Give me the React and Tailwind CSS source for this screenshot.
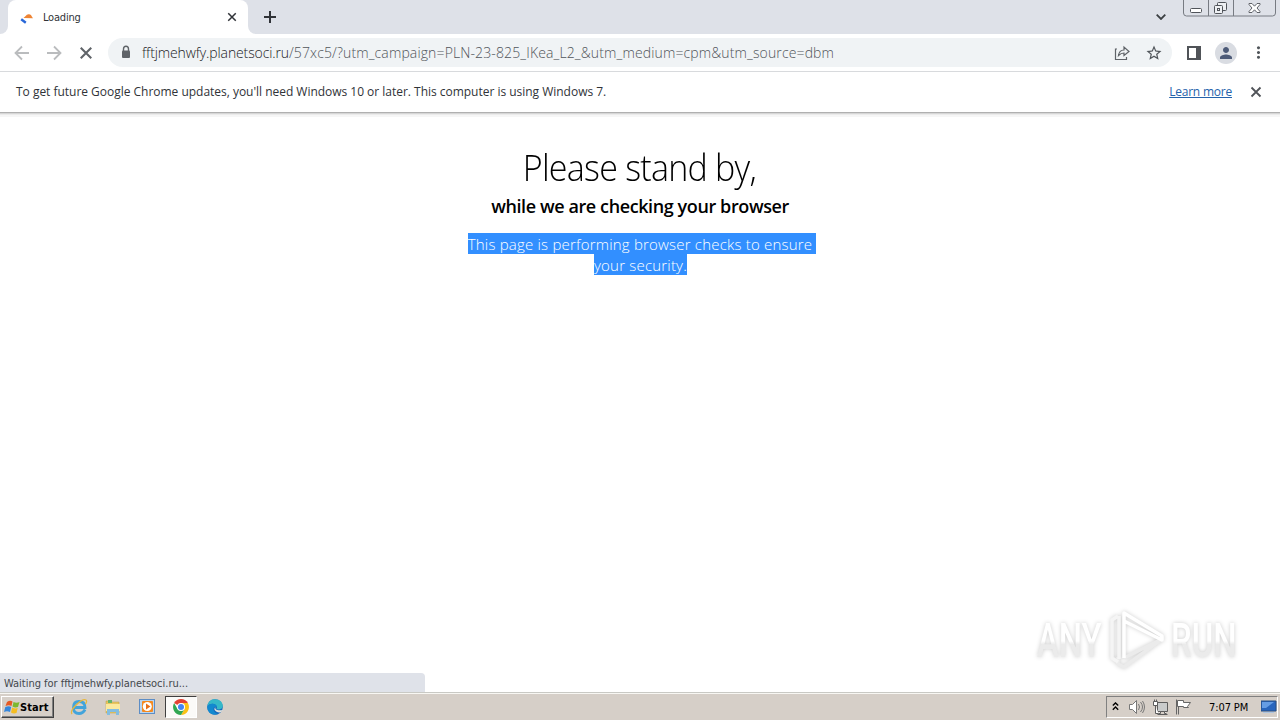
import React from "react";
import { MdPerson, MdStarBorder, MdMoreVert } from "react-icons/md";

function CloseIcon({ className }) {
  return (
    <svg viewBox="0 0 12 12" className={className} fill="none" stroke="currentColor">
      <path d="M1.500 1.500l9 9M10.500 1.500l-9 9" strokeWidth="1.800" />
    </svg>
  );
}

function ArrowIcon({ className }) {
  return (
    <svg viewBox="0 0 16 16" className={className} fill="none" stroke="currentColor" strokeWidth="1.800">
      <path d="M15 8H2M8 1.500L1.500 8L8 14.500" />
    </svg>
  );
}

function LockIcon() {
  return (
    <svg viewBox="0 0 16 16" className="mb-[2px] size-4" fill="none">
      <rect x="4" y="6.500" width="8" height="7.500" rx="1" fill="#5f6368" />
      <path d="M5.500 7V5q0-2.800 2.500-2.800T10.500 5v2" stroke="#5f6368" strokeWidth="1.400" />
    </svg>
  );
}

function TabStrip() {
  return (
    <div className="flex h-[34px] bg-[#dee1e8]">
      <div className="h-full w-2 bg-white">
        <div className="h-full rounded-br-lg bg-[#dee1e8]" />
      </div>
      <div className="flex h-full w-[240px] items-center rounded-t-lg bg-white pl-3">
        {/* Favicon */}
        <svg viewBox="0 0 16 16" className="mt-[3px] size-4 shrink-0">
          <path d="M3.500 7C5 6 6 3.500 8.500 3.200c2-.2 3 1 3.300 2.300L13 7.200z" fill="#ee8434" />
          <path d="M1.200 8.300L5.800 11.800" fill="none" stroke="#2867d8" strokeWidth="2.400" />
        </svg>
        <span className="mt-[2px] ml-[7px] flex-1 font-['DejaVu_Sans_Condensed','DejaVu_Sans',sans-serif] text-[11px] tracking-[-0.2px] text-[#303338]">
          Loading
        </span>
        <CloseIcon className="mr-[11px] size-[10px] text-[#303338]" />
      </div>
      <div className="h-full w-2 bg-white">
        <div className="h-full rounded-bl-lg bg-[#dee1e8]" />
      </div>
      <svg viewBox="0 0 12 12" className="mt-[11px] ml-2 size-3" stroke="#303338" strokeWidth="2">
        <path d="M6 0v12M0 6h12" />
      </svg>
      <div className="flex-1" />
      <svg viewBox="0 0 10 6" className="mt-[14px] mr-[17px] h-[6px] w-[10px]" fill="none" stroke="#3c4043" strokeWidth="1.800">
        <path d="M.7.7L5 5L9.300.7" />
      </svg>
      {/* Window controls */}
      <svg viewBox="0 0 94 18" className="mr-[3px] h-[18px] w-[94px]" fill="none" stroke="#777b82">
        <path d="M.5 0v13q0 3 3 3h86q3 0 3-3V0M25.500 0v16M50.500 0v16" />
        <rect x="7.500" y="8.500" width="11" height="4" rx="1" fill="#fff" stroke="#50545a" />
        <g stroke="#50545a" fill="#eef0f3">
          <rect x="34.500" y="2.500" width="9" height="8" rx="1" />
          <rect x="31.500" y="5.500" width="8" height="8" rx="1" />
          <rect x="34.500" y="8.500" width="2" height="2" />
        </g>
        <path
          d="M66 3.500h3l2.500 2.700L74 3.500h3v1l-3 3.500 3 3.500v1h-3l-2.500-2.700L69 12.500h-3v-1L69 8l-3-3.500z"
          fill="#fff"
          stroke="#50545a"
          strokeWidth=".9"
        />
      </svg>
    </div>
  );
}

function Toolbar() {
  return (
    <div className="flex h-[38px] items-center border-b border-[#d8dadd] bg-white pl-[14px]">
      <ArrowIcon className="size-4 text-[#babcbe]" />
      <ArrowIcon className="ml-4 size-4 rotate-180 text-[#babcbe]" />
      <CloseIcon className="ml-[17px] size-[14px] text-[#5f6368]" />
      <div className="ml-[15px] flex h-[29px] w-[1064px] items-center rounded-full bg-[#f0f3f5] pl-[10px]">
        <LockIcon />
        <div className="ml-2 flex-1 font-['Open_Sans',sans-serif] text-[14px] font-light whitespace-nowrap text-[#50555a]">
          <span className="tracking-[-0.12px] text-[#202124]">fftjmehwfy.planetsoci.ru</span>
          <span className="tracking-[0.13px]">
            /57xc5/?utm_campaign=PLN-23-825_IKea_L2_&amp;utm_medium=cpm&amp;utm_source=dbm
          </span>
        </div>
        <svg viewBox="0 0 16 16" className="size-4" fill="none" stroke="#5f6368" strokeWidth="1.200">
          <path d="M3 4H1.500v10.500h11V12" />
          <path d="M4.500 10.500C5 7 7 5 10 5V2l5 4.500-5 4V8C7.500 8 6 9 4.500 10.500z" />
        </svg>
        <MdStarBorder className="mr-[9px] ml-[15px] size-[18px] text-[#50555a]" />
      </div>
      <svg viewBox="0 0 14 14" className="ml-[15px] h-[14px] w-[14px] shrink-0">
        <path d="M0 0h14v14H0zM2 2v10h7V2z" fill="#505358" fillRule="evenodd" />
      </svg>
      <div className="ml-[14px] flex size-[22px] shrink-0 items-center justify-center rounded-full bg-[#d9dce2]">
        <MdPerson className="size-[18px] text-[#4d5b78]" />
      </div>
      <MdMoreVert className="ml-[12px] size-[19px] shrink-0 text-[#50555a]" />
    </div>
  );
}

function InfoBar() {
  return (
    <div className="relative flex h-[41px] items-center border-b border-[#b0b0b0] bg-white pr-[18px] pl-4 font-['Open_Sans',sans-serif] text-[12px] whitespace-nowrap shadow-[0_1px_0_#d6d6d6,0_2px_0_#ebebeb,0_4px_0_#f6f6f6]">
      <span className="flex-1 tracking-[-0.02px] text-[#303338]">
        To get future Google Chrome updates, you'll need Windows 10 or later. This computer is using Windows 7.
      </span>
      <a href="#" className="tracking-[-0.22px] text-[#2462ab] underline">
        Learn more
      </a>
      <CloseIcon className="ml-[18px] size-[12px] text-[#505358]" />
    </div>
  );
}

function PageContent() {
  return (
    <main className="flex flex-1 flex-col items-center bg-white pt-[30px] font-['Open_Sans',sans-serif] text-black">
      <h1 className="mr-[2px] h-[49px] scale-x-[0.945] text-[36px] leading-[50px] font-light tracking-[-0.8px]">
        Please stand by,
      </h1>
      <h2 className="h-7 text-[18px] leading-7 font-semibold tracking-[-0.4px]">while we are checking your browser</h2>
      <p className="mt-[13px] flex flex-col items-center text-[15px] leading-[21px] font-light tracking-[0.2px] text-white">
        <span className="ml-[4px] bg-[#328fff] pt-px pr-1 leading-5 whitespace-nowrap">
          This page is performing browser checks to ensure
        </span>
        <span className="ml-px bg-[#328fff] pt-px leading-5">your security.</span>
      </p>
    </main>
  );
}

function Watermark() {
  return (
    <div className="absolute right-[43px] bottom-[18px] flex h-[66px] w-[200px] items-center justify-between font-['Roboto',sans-serif] text-[49px] leading-[66px] font-medium drop-shadow-[0_0_2px_rgba(0,0,0,0.2)]">
      <div className="w-[66px]">
        <span className="block w-max origin-left scale-x-[0.67] bg-linear-to-b from-white from-50% to-[#ebebeb] to-55% bg-clip-text text-transparent">
          ANY
        </span>
      </div>
      <svg viewBox="0 0 58 64" className="h-16 w-[58px] shrink-0" fill="none" strokeWidth="3.500" strokeLinejoin="round">
        <path d="M16 49L54 30L16 58l-6-3v-7" stroke="#ebebeb" />
        <path d="M10 7L4 11v38l6 4M11 50V7" stroke="#f5f5f5" />
        <path d="M16 49V4l38 23v4L16 12" stroke="#fff" />
      </svg>
      <div className="w-[66px]">
        <span className="block w-max origin-left scale-x-[0.67] bg-linear-to-b from-white from-50% to-[#ebebeb] to-55% bg-clip-text text-transparent">
          RUN
        </span>
      </div>
    </div>
  );
}

function StatusBubble() {
  return (
    <div className="absolute bottom-0 left-0 flex h-[19px] w-[425px] items-center rounded-tr bg-[#dfe2e9] pt-[3px] pl-[4px] font-['DejaVu_Sans_Condensed','DejaVu_Sans',sans-serif] text-[11px] text-[#44474c]">
      <span className="tracking-[-0.02px]">Waiting for fftjmehwfy.planetsoci.ru...</span>
    </div>
  );
}

function WindowsFlag() {
  return (
    <svg viewBox="0 0 16 16" className="size-4">
      <path d="M3 3q3-2 5.500-.5L7.500 7Q5 5.500 1.500 7z" fill="#e65a24" />
      <path d="M9.500 3q3 1.500 6 0L14 8q-3 1-5.500-.5z" fill="#7cb82f" />
      <path d="M1.300 8Q5 6.500 7.200 8L6 13Q3 11.500 0 13z" fill="#3587dc" />
      <path d="M8.200 8.500q3 1.500 5.500.5l-1.200 5q-3 1-5.500-.5z" fill="#f5bd20" />
    </svg>
  );
}

function ExplorerIcon() {
  return (
    <svg viewBox="0 0 18 18" className="size-[18px]" fill="none">
      <path d="M15 11.500q-2 4-6 4-5.500 0-5.500-6t5.500-6q6 0 6 6H5" stroke="#43a4db" strokeWidth="2.800" />
      <path d="M2 16C-1 12 12 0 16 2c1.500 1-.5 4-.5 4" stroke="#e6b73e" strokeWidth="1.300" />
    </svg>
  );
}

function FolderIcon() {
  return (
    <svg viewBox="0 0 18 18" className="size-[18px]">
      <path d="M2 3h5l1 1h7v11H2z" fill="#e8c55e" stroke="#b89c48" strokeWidth=".5" />
      <path d="M4 2h4v3H4z" fill="#65b36a" />
      <path d="M2 6h14v7H2z" fill="#fae99e" />
      <path d="M3 17v-6h12v6h-3v-3H6v3z" fill="#83bde0" />
    </svg>
  );
}

function MediaIcon() {
  return (
    <svg viewBox="0 0 18 18" className="size-[18px]">
      <rect x="1.500" y="1.500" width="15" height="14" fill="#b9d5f0" stroke="#5d8dc5" />
      <rect x="4" y="3" width="11" height="11" rx="1" fill="#f58a20" />
      <circle cx="9.300" cy="8.500" r="4.500" fill="#fff" />
      <path d="M8 5.500l4.500 3-4.500 3z" fill="#e9711a" />
    </svg>
  );
}

function ChromeIcon() {
  return (
    <svg viewBox="0 0 16 16" className="size-4">
      <path d="M8 8L1.100 4A8 8 0 0 1 14.900 4z" fill="#e34133" />
      <path d="M8 8V4h6.900A8 8 0 0 1 8 16l3.500-6z" fill="#fbc116" />
      <path d="M8 8l3.500 2L8 16A8 8 0 0 1 1.100 4l3.400 6z" fill="#31a753" />
      <circle cx="8" cy="8" r="4" fill="#fff" />
      <circle cx="8" cy="8" r="3" fill="#4285f4" />
    </svg>
  );
}

function EdgeIcon() {
  return (
    <svg viewBox="0 0 16 16" className="size-4">
      <circle cx="8" cy="8" r="7.800" fill="#1668bd" />
      <path d="M.5 7C1 2 4.500.2 8 .2c5 0 7.800 3.500 7.800 6.300 0 3-2.300 4-4.300 4-2 0-2.500-1-1.500-2C10 5 4 3 .5 7z" fill="#35b8c8" />
      <path d="M.5 7C4 3 10 5 10 8c-2-1-4 0-3.500 3 .5 2.500 3 3.500 4.500 4C5 17-.5 13 .5 7z" fill="#1289cf" />
      <path d="M8.500 8c-1 2 1 4 7.500 3-1 1.500-2.300 2.300-3.500 2.500C8 13 6 10 8.500 8z" fill="#e2e2dc" />
    </svg>
  );
}

function Tray() {
  return (
    <div className="flex h-[22px] w-[172px] items-center border border-t-[#808080] border-r-white border-b-white border-l-[#808080] pl-[5px]">
      <svg viewBox="0 0 7 10" className="mb-[2px] h-[9px] w-[7px]" fill="none" stroke="#000" strokeWidth="1.500">
        <path d="M.5 4l3-3 3 3M.5 8.500l3-3 3 3" />
      </svg>
      <svg viewBox="0 0 18 16" className="ml-[9px] h-4 w-[18px]" fill="#fff" stroke="#777" strokeWidth="1">
        <path d="M1.500 5.500h3l4-4v13l-4-4h-3z" />
        <path d="M10.500 5q2 3 0 6M12.500 3q4 5 0 10M14.500 2q4 6 0 12" fill="none" />
      </svg>
      <svg viewBox="0 0 17 17" className="ml-[6px] size-[17px]" fill="#fff" stroke="#5d5d5d">
        <path d="M5.500 3.500h10v9h-10z" fill="#c9cbcb" />
        <path d="M8.500 12.500v2h-2M12.500 12.500v2h2M5.500 15.500h10M1.500 2.500h4v4h-4zM2.500.5v2M4.500.5v2M3.500 6.500v8h3" />
      </svg>
      <svg viewBox="0 0 17 16" className="ml-[6px] h-4 w-[17px]" fill="#fff" stroke="#666">
        <path d="M2.500 1.500h6v2h7l-3 4 1 1h-5v-1h-6zM1.500.5v15M3.500 8v7.500" />
      </svg>
      <span className="mt-[2px] ml-[17px] font-['DejaVu_Sans_Condensed','DejaVu_Sans',sans-serif] text-[11px] tracking-[-0.1px] whitespace-nowrap text-black">
        7:07 PM
      </span>
      <svg viewBox="0 0 16 14" className="ml-auto h-[14px] w-4">
        <path d="M0 1h15v10H0z" fill="#2865bd" stroke="#264f83" />
        <path d="M1 2h12L5 8H1z" fill="#659de5" />
        <path d="M2 12h11v1H2z" fill="#afc5df" />
      </svg>
    </div>
  );
}

function Taskbar() {
  return (
    <div className="flex h-[28px] shrink-0 items-center border-t border-[#c9c9c4] bg-[#d6cfc8] pt-[1px] pl-px shadow-[inset_0_1px_0_#f8f7f3]">
      <button className="flex h-[22px] w-[53px] items-center border border-t-white border-r-[#404040] border-b-[#404040] border-l-white pl-[2px] font-['DejaVu_Sans_Condensed','DejaVu_Sans',sans-serif] text-[11px] font-bold text-black shadow-[inset_-1px_-1px_0_#808080]">
        <WindowsFlag />
        <span className="mt-[2px] tracking-[0.1px]">Start</span>
      </button>
      <div className="ml-[16px] flex items-center gap-[16px]">
        <ExplorerIcon />
        <FolderIcon />
        <MediaIcon />
      </div>
      <div className="ml-[9px] flex h-[22px] w-8 items-center justify-center border border-t-[#404040] border-r-white border-b-white border-l-[#404040] bg-[#fbfaf8]">
        <ChromeIcon />
      </div>
      <div className="ml-[10px]">
        <EdgeIcon />
      </div>
      <div className="mr-[2px] ml-auto">
        <Tray />
      </div>
    </div>
  );
}

export default function App() {
  return (
    <div className="flex h-screen w-full flex-col overflow-hidden bg-white">
      <div className="relative flex flex-1 flex-col">
        <TabStrip />
        <Toolbar />
        <InfoBar />
        <PageContent />
        <Watermark />
        <StatusBubble />
      </div>
      <Taskbar />
    </div>
  );
}
